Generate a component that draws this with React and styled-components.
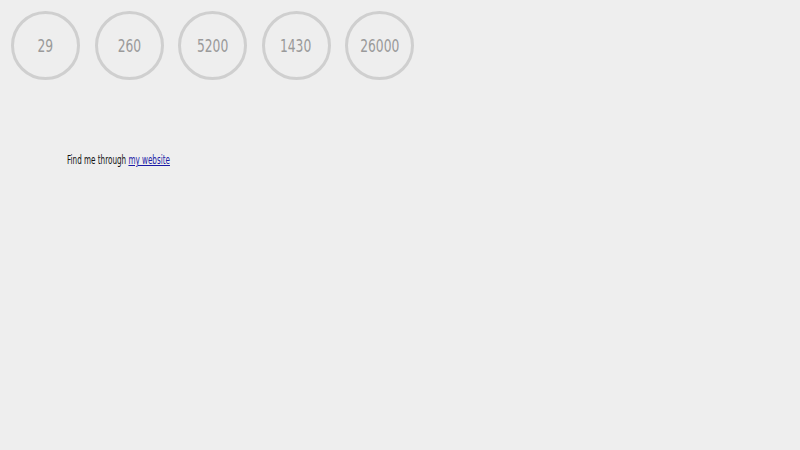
import React from "react";
import styled, { createGlobalStyle } from "styled-components";

const Global = createGlobalStyle`
  html, body { margin: 0; padding: 0; background: #eeeeee; }
  body { font-family: "DejaVu Sans Condensed", "DejaVu Sans", sans-serif; }
`;

const Page = styled.div`
  width: 800px;
  height: 450px;
  background: #eeeeee;
  display: flex;
  flex-direction: column;
`;

const Row = styled.div`
  display: flex;
  gap: 14.5px;
  padding: 11px 0 0 11px;
`;

const Circle = styled.div`
  box-sizing: border-box;
  width: 69px;
  height: 69px;
  border: 3.5px solid #cfcfcf;
  border-radius: 50%;
  display: flex;
  align-items: center;
  justify-content: center;
  color: #9a9a9a;
  font-size: 18px;
`;

const Narrow = styled.span`
  display: inline-block;
  white-space: nowrap;
  transform: scaleX(${(p) => p.$scale});
  transform-origin: ${(p) => p.$origin || "center"};
`;

const Footer = styled.p`
  margin: 72px 0 0 67px;
  font-size: 13px;
  color: #111;
`;

const Link = styled.a`
  color: #1a1aa6;
  text-decoration: underline;
`;

const numbers = [29, 260, 5200, 1430, 26000];

export default function App() {
  return (
    <Page>
      <Global />
      <Row>
        {numbers.map((n) => (
          <Circle key={n}>
            <Narrow $scale={0.76}>{n}</Narrow>
          </Circle>
        ))}
      </Row>
      <Footer>
        <Narrow $scale={0.617} $origin="left center">
          Find me through <Link href="#">my website</Link>
        </Narrow>
      </Footer>
    </Page>
  );
}
